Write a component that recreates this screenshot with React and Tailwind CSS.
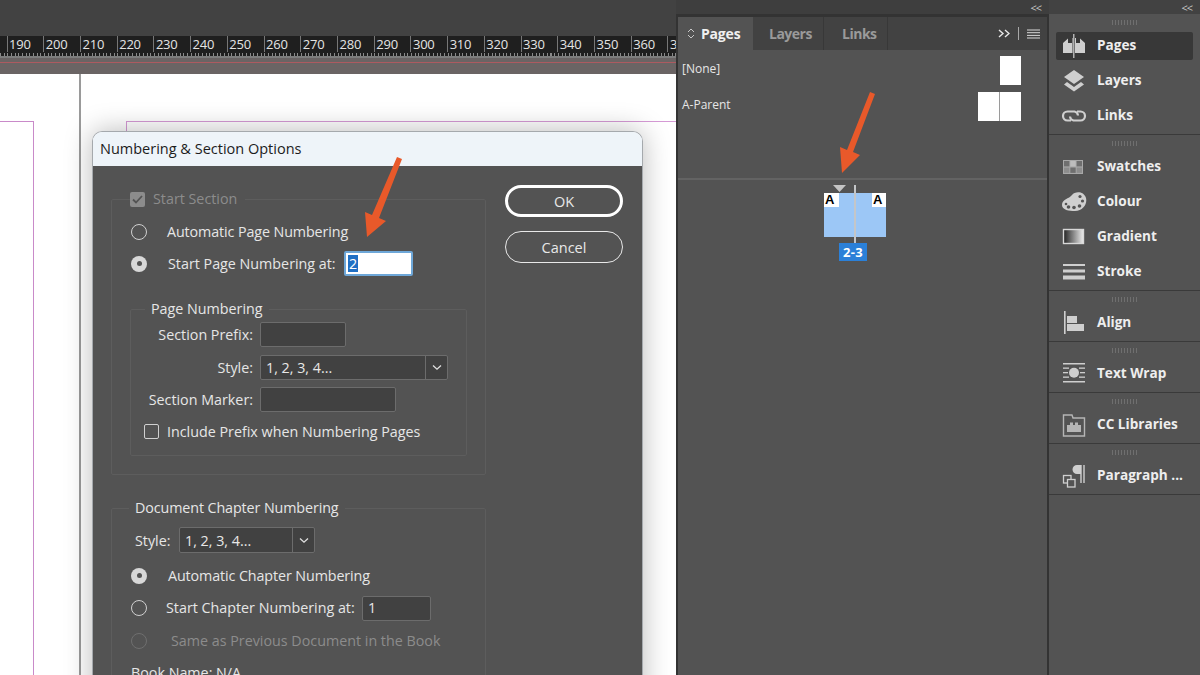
import React from 'react';

const rulerMarks = [190, 200, 210, 220, 230, 240, 250, 260, 270, 280, 290, 300, 310, 320, 330, 340, 350, 360, 370];

const dockSections = [
  { rows: [{ label: 'Pages', icon: 'pages', active: true }, { label: 'Layers', icon: 'layers' }, { label: 'Links', icon: 'links' }] },
  { rows: [{ label: 'Swatches', icon: 'swatches' }, { label: 'Colour', icon: 'colour' }, { label: 'Gradient', icon: 'gradient' }, { label: 'Stroke', icon: 'stroke' }] },
  { rows: [{ label: 'Align', icon: 'align' }] },
  { rows: [{ label: 'Text Wrap', icon: 'wrap' }] },
  { rows: [{ label: 'CC Libraries', icon: 'libraries' }] },
  { rows: [{ label: 'Paragraph ...', icon: 'paragraph' }] },
];

const DockIcon = ({ name }) => {
  const c = '#cfcfcf';
  return (
    <svg width="26" height="26" viewBox="0 0 26 26" className="shrink-0">
      {name === 'pages' && (
        <g fill={c}>
          <path d="M2 10 L7 5.5 V10 H11 V5 H11.5 V20 H2 Z" />
          <path d="M14 5 H15 V10 H19 V5.5 L24 10 V20 H14 Z" />
          <rect x="12.2" y="1" width="1.2" height="24" />
        </g>
      )}
      {name === 'layers' && (
        <g fill={c}>
          <path d="M13 2 L23 9 L13 16 L3 9 Z" />
          <path d="M6 14 L13 19 L20 14 L23 16.5 L13 23.5 L3 16.5 Z" />
        </g>
      )}
      {name === 'links' && (
        <g fill="none" stroke={c} strokeWidth="2.2">
          <path d="M10 17.5 H6.5 A4.5 4.5 0 0 1 6.5 8.5 H13.5 A4.5 4.5 0 0 1 17 12.5" />
          <path d="M16 8.5 H19.5 A4.5 4.5 0 0 1 19.5 17.5 H12.5 A4.5 4.5 0 0 1 9 13.5" />
        </g>
      )}
      {name === 'swatches' && (
        <g>
          <rect x="2" y="6" width="20" height="14" fill="#a8a8a8" />
          <rect x="3" y="7" width="5.4" height="5.4" fill="#6f6f6f" />
          <rect x="9.3" y="7" width="5.4" height="5.4" fill="#bdbdbd" />
          <rect x="15.6" y="7" width="5.4" height="5.4" fill="#6f6f6f" />
          <rect x="3" y="13.5" width="5.4" height="5.4" fill="#8d8d8d" />
          <rect x="9.3" y="13.5" width="5.4" height="5.4" fill="#6f6f6f" />
          <rect x="15.6" y="13.5" width="5.4" height="5.4" fill="#8d8d8d" />
        </g>
      )}
      {name === 'colour' && (
        <g>
          <path d="M1 16 C1 10 8 10 11 6 C14 2 23 2 25 9 C26.5 15 22 22 14 22 C8 22 1 21 1 16 Z" fill={c} />
          <circle cx="19" cy="7.5" r="1.6" fill="#535353" />
          <circle cx="21.5" cy="12" r="1.6" fill="#535353" />
          <circle cx="18.5" cy="17" r="1.8" fill="#535353" />
          <circle cx="13" cy="18.5" r="1.8" fill="#535353" />
          <circle cx="7.5" cy="18" r="1.8" fill="#535353" />
          <circle cx="5" cy="15" r="1.3" fill="#535353" />
        </g>
      )}
      {name === 'gradient' && (
        <g>
          <defs>
            <linearGradient id="dock-grad" x1="0" x2="1" y1="0" y2="0">
              <stop offset="0" stopColor="#222" />
              <stop offset="1" stopColor="#eee" />
            </linearGradient>
          </defs>
          <rect x="2.5" y="5.5" width="20" height="14" fill="url(#dock-grad)" stroke="#d8d8d8" strokeWidth="1.4" />
        </g>
      )}
      {name === 'stroke' && (
        <g fill={c}>
          <rect x="2" y="5" width="22" height="2" />
          <rect x="2" y="10.5" width="22" height="3" />
          <rect x="2" y="16.5" width="22" height="4" />
        </g>
      )}
      {name === 'align' && (
        <g fill={c}>
          <rect x="3" y="1" width="1.6" height="23" />
          <rect x="6" y="6" width="10" height="7" />
          <rect x="6" y="14" width="17" height="7" />
        </g>
      )}
      {name === 'wrap' && (
        <g fill={c}>
          <rect x="2" y="2" width="22" height="1.5" />
          <rect x="2" y="20" width="22" height="1.5" />
          <circle cx="13" cy="11.7" r="5" />
          <rect x="2" y="6.5" width="6" height="1.3" />
          <rect x="2" y="11" width="5" height="1.3" />
          <rect x="2" y="15.5" width="6" height="1.3" />
          <rect x="18" y="6.5" width="6" height="1.3" />
          <rect x="19" y="11" width="5" height="1.3" />
          <rect x="18" y="15.5" width="6" height="1.3" />
        </g>
      )}
      {name === 'libraries' && (
        <g>
          <path d="M2.5 3 H11 L12 6 H23.5 V24 H2.5 Z" fill="none" stroke="#b5b5b5" strokeWidth="1.4" />
          <path d="M6 20 V13 H9 V10.5 H12 V13 H14 V10.5 H17 V13 H20 V20 Z" fill="#b5b5b5" />
        </g>
      )}
      {name === 'paragraph' && (
        <g>
          <path d="M20 2 V20 M23 2 V20" stroke={c} strokeWidth="1.4" fill="none" />
          <path d="M20 2 H16 A4.5 4.5 0 0 0 16 11 H20 Z" fill={c} />
          <rect x="2.5" y="12.5" width="7.5" height="7.5" fill="#535353" stroke={c} strokeWidth="1.3" />
          <rect x="6.5" y="16.5" width="7.5" height="7.5" fill="#535353" stroke={c} strokeWidth="1.3" />
        </g>
      )}
    </svg>
  );
};

const Grip = () => (
  <div className="h-[5px] w-[25px] mx-auto bg-[repeating-linear-gradient(90deg,#6f6f6f_0,#6f6f6f_1px,transparent_1px,transparent_3px)]" />
);

const Radio = ({ checked, disabled }) => (
  <span className={`flex items-center justify-center w-[16px] h-[16px] rounded-full shrink-0 ${checked ? 'bg-[#d8d8d8]' : disabled ? 'border border-[#6f6f6f]' : 'border border-[#d0d0d0]'}`}>
    {checked && <span className="w-[5px] h-[5px] rounded-full bg-[#535353]" />}
  </span>
);

const Input = ({ className, children }) => (
  <div className={`h-[25px] flex items-center pl-[5px] rounded-[2px] bg-[#414141] border border-[#6c6c6c] text-[#e8e8e8] ${className}`}>{children}</div>
);

const Select = ({ className }) => (
  <div className={`flex items-stretch rounded-[2px] bg-[#414141] border border-[#6c6c6c] text-[#e8e8e8] ${className}`}>
    <span className="flex-1 flex items-center pl-[5px] pt-[1px]">1, 2, 3, 4...</span>
    <span className="flex items-center justify-center border-l border-[#6c6c6c] w-[22px]">
      <svg width="10" height="7" viewBox="0 0 10 7"><path d="M1 1.5 L5 5.2 L9 1.5" fill="none" stroke="#e0e0e0" strokeWidth="1.3" /></svg>
    </span>
  </div>
);

const Dialog = () => (
  <div className="absolute left-[92px] top-[57px] w-[551px] h-[620px] rounded-t-[10px] overflow-hidden shadow-[0_0_28px_rgba(0,0,0,0.28)] border-x border-t border-[#a5a9ad] text-[14.3px]">
    <div className="h-[34px] bg-[#eef4f9] flex items-center pl-[7px] text-[14.5px] text-[#1c1c1c]">Numbering &amp; Section Options</div>
    <div className="h-full bg-[#535353] flex pl-[18px] pt-[23px] text-[#e6e6e6]">
      <div className="w-[375px] shrink-0">
        <fieldset className="border border-[#5d5d5d] h-[286px] rounded-[2px]">
          <legend className="ml-[18px] pr-[8px] h-[20px] flex items-center gap-[8px] text-[#8c8c8c]">
            <span className="flex items-center justify-center w-[15px] h-[15px] bg-[#8c8c8c] rounded-[2px]">
              <svg width="11" height="9" viewBox="0 0 11 9"><path d="M1 4.5 L4 7.5 L10 1" fill="none" stroke="#535353" strokeWidth="1.8" /></svg>
            </span>
            Start Section
          </legend>
          <div className="flex flex-col gap-[7px] mt-[10px] pl-[19px]">
            <div className="h-[25px] flex items-center"><Radio /><span className="ml-[20px] whitespace-nowrap tracking-[-0.1px]">Automatic Page Numbering</span></div>
            <div className="h-[25px] flex items-center">
              <Radio checked /><span className="ml-[21px] w-[169px] whitespace-nowrap">Start Page Numbering at:</span>
              <div className="ml-[7px] w-[69px] h-[25px] bg-white border-2 border-[#6ea7d8] rounded-[2px] flex items-center pl-[2px]">
                <span className="bg-[#1f6fc4] text-white leading-[17px] px-[1px]">2</span>
              </div>
            </div>
          </div>
          <fieldset className="ml-[18px] mt-[23px] w-[337px] h-[157px] border border-[#5d5d5d] rounded-[2px]">
            <legend className="ml-[14px] px-[6px] h-[20px] flex items-center">Page Numbering</legend>
            <div className="grid grid-cols-[122px_1fr] gap-x-[7px] gap-y-[7.5px] mt-[3px] items-center">
              <span className="text-right pt-[1px]">Section Prefix:</span>
              <Input className="w-[86px]" />
              <span className="text-right pt-[1px]">Style:</span>
              <Select className="h-[25px] w-[188px]" />
              <span className="text-right pt-[1px]">Section Marker:</span>
              <Input className="w-[136px]" />
            </div>
            <div className="h-[25px] mt-[7px] flex items-center pl-[13px]">
              <span className="w-[15px] h-[15px] rounded-[2px] border border-[#d0d0d0]" />
              <span className="ml-[8px] whitespace-nowrap">Include Prefix when Numbering Pages</span>
            </div>
          </fieldset>
        </fieldset>
        <fieldset className="mt-[23px] border border-[#5d5d5d] rounded-[2px] h-[300px]">
          <legend className="ml-[17px] px-[6px] h-[20px] flex items-center tracking-[-0.1px]">Document Chapter Numbering</legend>
          <div className="flex items-center h-[26px] mt-[9px] pl-[23px]">
            <span className="w-[44px] pt-[1px]">Style:</span>
            <Select className="h-[26px] w-[136px]" />
          </div>
          <div className="flex flex-col gap-[7.5px] mt-[10px] pl-[19px]">
            <div className="h-[25px] flex items-center"><Radio checked /><span className="ml-[21px] whitespace-nowrap tracking-[-0.1px]">Automatic Chapter Numbering</span></div>
            <div className="h-[25px] flex items-center">
              <Radio /><span className="ml-[19px] w-[188px] whitespace-nowrap">Start Chapter Numbering at:</span>
              <Input className="ml-[8px] w-[69px]">1</Input>
            </div>
            <div className="h-[25px] flex items-center text-[#8c8c8c]"><Radio disabled /><span className="ml-[24px] whitespace-nowrap">Same as Previous Document in the Book</span></div>
            <div className="h-[25px] flex items-center">Book Name: N/A</div>
          </div>
        </fieldset>
      </div>
      <div className="ml-[19px] w-[118px] shrink-0 flex flex-col gap-[14px] -mt-[4px] text-[14.5px]">
        <button className="h-[32px] pt-[1px] rounded-full border-[3px] border-white text-[#e8e8e8]">OK</button>
        <button className="h-[32px] pt-[1px] rounded-full border-[1.5px] border-[#e8e8e8] text-[#e8e8e8]">Cancel</button>
      </div>
    </div>
  </div>
);

const PagesPanel = () => (
  <div className="w-[373px] shrink-0 h-full flex flex-col bg-[#3e3e3e]">
    <div className="h-[14px] flex justify-end items-center pr-[8px] text-[#c8c8c8] text-[11px] leading-none tracking-[-1px]">&lt;&lt;</div>
    <div className="flex-1 border-t-[3px] border-l-2 border-r-2 border-[#333] bg-[#535353] flex flex-col">
      <div className="h-[33px] flex bg-[#424242] font-bold text-[14px]">
        <div className="w-[75px] bg-[#535353] flex items-center pl-[9px] gap-[6px] text-[#f0f0f0] tracking-[-0.2px]">
          <svg width="8" height="11" viewBox="0 0 8 11"><path d="M1 4 L4 1 L7 4 M1 7 L4 10 L7 7" fill="none" stroke="#c8c8c8" strokeWidth="1" /></svg>
          Pages
        </div>
        <div className="w-[71px] pl-[16px] flex items-center border-r border-[#383838] text-[#9a9a9a] tracking-[-0.5px]">Layers</div>
        <div className="w-[64px] pl-[18px] flex items-center border-r border-[#383838] text-[#9a9a9a] tracking-[-0.5px]">Links</div>
        <div className="flex-1 flex items-center justify-end pr-[7px] gap-[8px]">
          <svg width="12" height="9" viewBox="0 0 12 9"><path d="M1 1 L5 4.5 L1 8 M7 1 L11 4.5 L7 8" fill="none" stroke="#e8e8e8" strokeWidth="1.4" /></svg>
          <span className="w-px h-[13px] bg-[#a8a8a8]" />
          <svg width="13" height="10" viewBox="0 0 13 10"><path d="M0 1 H13 M0 3.7 H13 M0 6.4 H13 M0 9 H13" stroke="#d8d8d8" strokeWidth="1" /></svg>
        </div>
      </div>
      <div className="h-[128px] pl-[4px] pr-[26px] pt-[6px] flex flex-col gap-[7px] text-[12px] text-[#e6e6e6]">
        <div className="flex items-center justify-between h-[29px]">
          <span className="-mt-[3px]">[None]</span>
          <span className="w-[21px] h-[29px] bg-white" />
        </div>
        <div className="flex items-center justify-between h-[29px]">
          <span className="-mt-[3px]">A-Parent</span>
          <span className="flex gap-px bg-[#9a9a9a]">
            <span className="w-[21px] h-[29px] bg-white" />
            <span className="w-[21px] h-[29px] bg-white" />
          </span>
        </div>
      </div>
      <div className="h-[2px] bg-[#636363]" />
      <div className="flex flex-col items-center pr-[15px]">
        <div className="relative w-[62px] h-[44px] mt-[13px] bg-[#9cc7f6]">
          <div className="absolute left-0 top-0 w-[15px] h-[14px] bg-white text-black font-bold text-[13px] leading-[14px] pl-[1px] font-['Liberation_Sans',sans-serif]">A</div>
          <div className="absolute right-0 top-0 w-[14px] h-[14px] bg-white text-black font-bold text-[13px] leading-[14px] pl-[1px] font-['Liberation_Sans',sans-serif]">A</div>
          <div className="absolute left-[30px] -top-[8px] w-[2px] h-[58px] bg-[#c4c6c8]" />
          <svg className="absolute left-[9px] -top-[8px]" width="13" height="7" viewBox="0 0 13 7"><path d="M0 0 H13 L6.5 7 Z" fill="#c4c4c4" /></svg>
        </div>
        <div className="mt-[6px] w-[28px] h-[18px] bg-[#2b80d8] text-white font-bold text-[13px] leading-[18px] text-center -ml-[4px] tracking-[0.4px]">2-3</div>
      </div>
    </div>
  </div>
);

const Dock = () => (
  <div className="flex-1 h-full flex flex-col bg-[#424242]">
    <div className="h-[14px] flex justify-end items-center pr-[8px] text-[#c8c8c8] text-[11px] leading-none tracking-[-1px]">&lt;&lt;</div>
    <div className="flex-1 bg-[#535353] flex flex-col">
      {dockSections.map((section, i) => (
        <div key={i} className="border-b border-[#3a3a3a] pt-[6px] pb-[1px]">
          <Grip />
          <div className="mt-[3px]">
            {section.rows.map((row) => (
              <div key={row.label} className="h-[35px] flex items-center">
                <div className={`flex items-center w-[137px] ml-[7px] h-[28px] rounded-[2px] pl-[5px] gap-[10px] ${row.active ? 'bg-[#383838]' : ''}`}>
                  <DockIcon name={row.icon} />
                  <span className="font-bold text-[13.6px] text-[#eeeeee] whitespace-nowrap">{row.label}</span>
                </div>
              </div>
            ))}
          </div>
        </div>
      ))}
    </div>
  </div>
);

export default function App() {
  return (
    <div className="relative w-[1200px] h-[675px] overflow-hidden flex bg-[#424242] font-['Open_Sans','Liberation_Sans',sans-serif]">
      <div className="w-[676px] shrink-0 h-full flex flex-col">
        <div className="h-[36px] bg-[#424242]" />
        <div className="relative h-[20px] bg-[#1f1f1f] overflow-hidden flex pl-[6.5px] text-[#e4e4e4] text-[13px]">
          {rulerMarks.map((n) => (
            <div key={n} className="w-[36.72px] shrink-0 pl-[1.5px] border-l border-[#777] h-[16px] leading-[17px] whitespace-nowrap tracking-[-0.2px]">{n}</div>
          ))}
          <div className="absolute left-0 right-0 bottom-0 h-[3px] bg-[repeating-linear-gradient(90deg,#8a8a8a_0,#8a8a8a_1px,transparent_1px,transparent_3.67px)]" />
        </div>
        <div className="h-[18px] bg-[#6a6464] border-t-2 border-[#7d7d7d] pt-[4px]">
          <div className="h-px bg-[#ad5a60]" />
        </div>
        <div className="relative flex-1 bg-white overflow-visible">
          <div className="absolute left-[79px] top-0 bottom-0 w-[1.5px] bg-[#9a9a9a]" />
          <div className="absolute left-0 top-[47px] w-[34px] bottom-0 border-t border-r border-[#c98ac9]" />
          <div className="absolute left-[126px] top-[47px] right-0 bottom-0 border-t border-l border-[#d59ad5]" />
          <Dialog />
        </div>
      </div>
      <PagesPanel />
      <Dock />
      <svg className="absolute inset-0 pointer-events-none" width="1200" height="675" viewBox="0 0 1200 675">
        <path d="M397 157 L402 159 L379 218 L386 221 L367 237 L365 212 L372 215 Z" fill="#e8592a" />
        <path d="M870 92 L875 94 L853 152 L860 155 L842 173 L840 147 L847 150 Z" fill="#e8592a" />
      </svg>
    </div>
  );
}
